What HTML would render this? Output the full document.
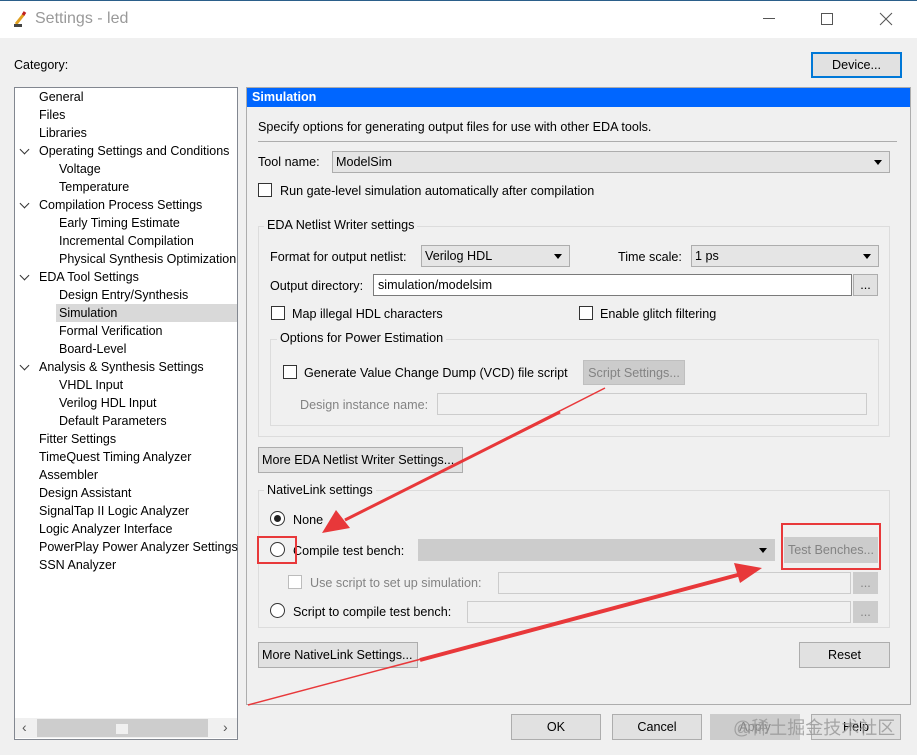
<!DOCTYPE html>
<html><head><meta charset="utf-8"><style>
*{box-sizing:border-box;margin:0;padding:0}
body{width:917px;height:755px;position:relative;overflow:hidden;background:#f0f0f0;font-family:"Liberation Sans","Noto Sans CJK SC",sans-serif;font-size:12.6px;color:#000}
.a{position:absolute;white-space:nowrap}
.btn{position:absolute;background:#e1e1e1;border:1px solid #adadad;text-align:center;line-height:24px}
.cb{position:absolute;width:14px;height:14px;border:1px solid #333;background:#fff}
.cbd{border-color:#bcbcbc}
.rb{position:absolute;width:15px;height:15px;border:1px solid #333;border-radius:50%;background:#fff}
.combo{position:absolute;background:#e5e5e5;border:1px solid #adadad;height:22px;line-height:20px;padding-left:3px}
.combo:after{content:"";position:absolute;right:7px;top:8px;border-left:4px solid transparent;border-right:4px solid transparent;border-top:5px solid #000}
.in{position:absolute;background:#fff;border:1px solid #7a7a7a;height:22px;line-height:20px;padding-left:4px}
.ind{background:#f0f0f0;border-color:#ccc}
.dis{color:#838383}
.grp{position:absolute;border:1px solid #dcdcdc}
.tree div{height:18px;line-height:18px;position:relative}
.chev{position:absolute;left:-18px;top:4px;width:7px;height:7px;border-right:1.5px solid #333;border-bottom:1.5px solid #333;transform:rotate(45deg)}
</style></head><body>
<div class="a" style="left:0;top:0;width:917px;height:38px;background:#fff"></div>
<div class="a" style="left:0;top:0;width:917px;height:1px;background:#2b5f8a"></div>
<svg class="a" style="left:12px;top:10px" width="16" height="18"><path d="M4 14 L12 4" stroke="#e0a020" stroke-width="3"/><path d="M11 5 L13 2" stroke="#c02020" stroke-width="3"/><rect x="2" y="14" width="8" height="3" fill="#444"/></svg>
<div class="a" style="left:35px;top:10px;font-size:16px;color:#999">Settings - led</div>
<div class="a" style="left:763px;top:18px;width:12px;height:1px;background:#555"></div>
<div class="a" style="left:821px;top:13px;width:12px;height:12px;border:1px solid #555"></div>
<svg class="a" style="left:879px;top:12px" width="14" height="14"><path d="M1 1L13 13M13 1L1 13" stroke="#555" stroke-width="1"/></svg>
<div class="a" style="left:14px;top:58px;font-size:12.5px">Category:</div>
<div class="btn" style="left:811px;top:52px;width:91px;height:26px;border:2px solid #0078d7;line-height:22px">Device...</div>

<div class="a" style="left:14px;top:87px;width:224px;height:653px;background:#fff;border:1px solid #828790"></div>
<div class="a tree" style="left:39px;top:88px;font-size:12.5px">
<div>General</div><div>Files</div><div>Libraries</div>
<div><span class="chev"></span>Operating Settings and Conditions</div>
<div style="left:20px">Voltage</div><div style="left:20px">Temperature</div>
<div><span class="chev"></span>Compilation Process Settings</div>
<div style="left:20px">Early Timing Estimate</div><div style="left:20px">Incremental Compilation</div><div style="left:20px">Physical Synthesis Optimization</div>
<div><span class="chev"></span>EDA Tool Settings</div>
<div style="left:20px">Design Entry/Synthesis</div>
<div style="left:17px;width:181px;background:#d9d9d9;padding-left:3px">Simulation</div>
<div style="left:20px">Formal Verification</div><div style="left:20px">Board-Level</div>
<div><span class="chev"></span>Analysis &amp; Synthesis Settings</div>
<div style="left:20px">VHDL Input</div><div style="left:20px">Verilog HDL Input</div><div style="left:20px">Default Parameters</div>
<div>Fitter Settings</div><div>TimeQuest Timing Analyzer</div><div>Assembler</div><div>Design Assistant</div><div>SignalTap II Logic Analyzer</div><div>Logic Analyzer Interface</div><div>PowerPlay Power Analyzer Settings</div><div>SSN Analyzer</div>
</div>
<div class="a" style="left:15px;top:718px;width:222px;height:20px;background:#f0f0f0"></div>
<div class="a" style="left:37px;top:719px;width:171px;height:18px;background:#cdcdcd"></div>
<div class="a" style="left:116px;top:724px;width:12px;height:10px;background:#f0f0f0"></div>
<div class="a" style="left:22px;top:719px;font-size:14px;color:#555">‹</div>
<div class="a" style="left:223px;top:719px;font-size:14px;color:#555">›</div>

<div class="a" style="left:246px;top:87px;width:665px;height:618px;border:1px solid #adadad"></div>
<div class="a" style="left:247px;top:88px;width:663px;height:19px;background:#0066ff;color:#fff;font-weight:bold;padding-left:5px;line-height:19px">Simulation</div>
<div class="a" style="left:258px;top:120px">Specify options for generating output files for use with other EDA tools.</div>
<div class="a" style="left:258px;top:141px;width:639px;height:1px;background:#adadad"></div>
<div class="a" style="left:258px;top:155px">Tool name:</div>
<div class="combo" style="left:332px;top:151px;width:558px">ModelSim</div>
<div class="cb" style="left:258px;top:183px"></div>
<div class="a" style="left:280px;top:184px">Run gate-level simulation automatically after compilation</div>

<div class="grp" style="left:258px;top:226px;width:632px;height:211px"></div>
<div class="a" style="left:264px;top:218px;background:#f0f0f0;padding:0 3px">EDA Netlist Writer settings</div>
<div class="a" style="left:270px;top:250px">Format for output netlist:</div>
<div class="combo" style="left:421px;top:245px;width:149px">Verilog HDL</div>
<div class="a" style="left:618px;top:250px">Time scale:</div>
<div class="combo" style="left:691px;top:245px;width:188px">1 ps</div>
<div class="a" style="left:270px;top:279px">Output directory:</div>
<div class="in" style="left:373px;top:274px;width:479px">simulation/modelsim</div>
<div class="btn" style="left:853px;top:274px;width:25px;height:22px;line-height:20px">...</div>
<div class="cb" style="left:271px;top:306px"></div>
<div class="a" style="left:292px;top:307px">Map illegal HDL characters</div>
<div class="cb" style="left:579px;top:306px"></div>
<div class="a" style="left:600px;top:307px">Enable glitch filtering</div>
<div class="grp" style="left:270px;top:339px;width:609px;height:87px"></div>
<div class="a" style="left:277px;top:331px;background:#f0f0f0;padding:0 3px">Options for Power Estimation</div>
<div class="cb" style="left:283px;top:365px"></div>
<div class="a" style="left:304px;top:366px">Generate Value Change Dump (VCD) file script</div>
<div class="btn dis" style="left:583px;top:360px;width:102px;height:25px;background:#ccc;border-color:#bfbfbf">Script Settings...</div>
<div class="a dis" style="left:300px;top:398px">Design instance name:</div>
<div class="in ind" style="left:437px;top:393px;width:430px"></div>
<div class="btn" style="left:258px;top:447px;width:205px;height:26px;line-height:24px;text-align:left;padding-left:3px">More EDA Netlist Writer Settings...</div>

<div class="grp" style="left:258px;top:490px;width:632px;height:138px"></div>
<div class="a" style="left:264px;top:483px;background:#f0f0f0;padding:0 3px">NativeLink settings</div>
<div class="rb" style="left:270px;top:511px"></div><div class="a" style="left:274px;top:515px;width:7px;height:7px;border-radius:50%;background:#222"></div>
<div class="a" style="left:293px;top:513px">None</div>
<div class="rb" style="left:270px;top:542px"></div>
<div class="a" style="left:293px;top:544px">Compile test bench:</div>
<div class="combo" style="left:418px;top:539px;width:357px;background:#ccc;border-color:#ccc"></div>
<div class="btn dis" style="left:784px;top:537px;width:94px;height:26px;background:#ccc;border-color:#ccc">Test Benches...</div>
<div class="cb cbd" style="left:288px;top:575px"></div>
<div class="a dis" style="left:310px;top:576px">Use script to set up simulation:</div>
<div class="in ind" style="left:498px;top:572px;width:353px"></div>
<div class="btn dis" style="left:853px;top:572px;width:25px;height:22px;line-height:20px;background:#ccc;border-color:#ccc">...</div>
<div class="rb" style="left:270px;top:603px"></div>
<div class="a" style="left:293px;top:605px">Script to compile test bench:</div>
<div class="in ind" style="left:467px;top:601px;width:384px"></div>
<div class="btn dis" style="left:853px;top:601px;width:25px;height:22px;line-height:20px;background:#ccc;border-color:#ccc">...</div>
<div class="btn" style="left:258px;top:642px;width:160px;height:26px;text-align:left;padding-left:3px">More NativeLink Settings...</div>
<div class="btn" style="left:799px;top:642px;width:91px;height:26px">Reset</div>

<div class="btn" style="left:511px;top:714px;width:90px;height:26px">OK</div>
<div class="btn" style="left:612px;top:714px;width:90px;height:26px">Cancel</div>
<div class="btn dis" style="left:710px;top:714px;width:90px;height:26px;background:#ccc;border-color:#ccc">Apply</div>
<div class="btn" style="left:811px;top:714px;width:90px;height:26px">Help</div>
<div class="a" style="left:733px;top:714px;font-size:18px;color:rgba(150,150,150,.8)">@稀土掘金技术社区</div>

<svg class="a" style="left:0;top:0" width="917" height="755">
<g stroke="#e8383a" fill="none" stroke-width="2">
<rect x="258" y="537" width="38" height="26"/>
<rect x="782" y="524" width="98" height="45"/>
</g>
<line x1="605" y1="388" x2="345" y2="520" stroke="#e8383a" stroke-width="1.5"/>
<line x1="560" y1="412" x2="345" y2="520" stroke="#e8383a" stroke-width="3"/>
<polygon points="322,533 336,510 350,528" fill="#e8383a"/>
<line x1="248" y1="705" x2="745" y2="573" stroke="#e8383a" stroke-width="1.5"/>
<line x1="420" y1="660" x2="745" y2="573" stroke="#e8383a" stroke-width="4"/>
<polygon points="762,568 734,563 740,583" fill="#e8383a"/>
</svg>
</body></html>
